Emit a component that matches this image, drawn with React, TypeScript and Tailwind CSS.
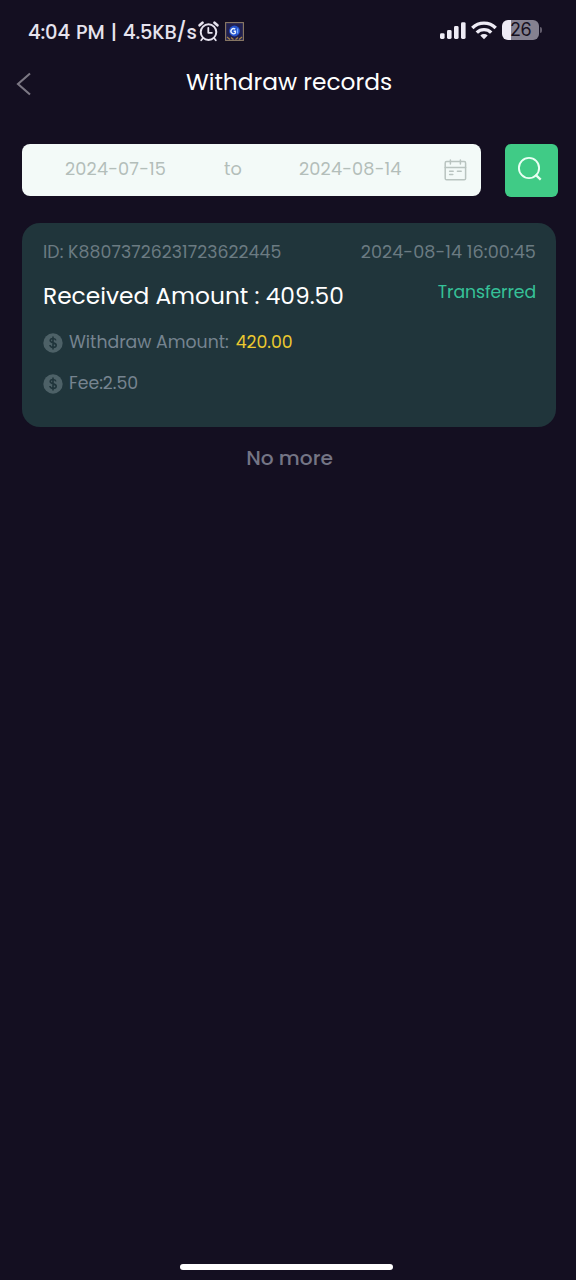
import React from "react";

function AlarmIcon() {
  return (
    <svg className="h-[21px] w-[21px] shrink-0" viewBox="0 0 21 21" fill="none" stroke="#e6e3ee" strokeLinecap="round">
      <circle cx="10.5" cy="11.1" r="7.8" strokeWidth="2" />
      <path d="M10.3 6.800v5h3.600" strokeWidth="1.8" strokeLinejoin="round" />
      <path d="M1.6 4.300 4.500 1.700M19.400 4.300 16.500 1.700" strokeWidth="2.600" />
      <path d="M4.800 17.200 3.200 19.200M16.200 17.200l1.600 2" strokeWidth="1.800" />
    </svg>
  );
}

function AppBadge() {
  return (
    <svg className="ml-[6px] h-[19px] w-[19px] shrink-0" viewBox="0 0 19 19">
      <rect x="0.6" y="0.6" width="17.8" height="17.8" fill="#20204f" stroke="#8c7b66" strokeWidth="1.1" />
      <path d="M2 15l3 2.500M6 15.500l2.500 2M13 15.500l-2.500 2M17 15l-3 2.500" stroke="#a58446" strokeWidth="1.2" fill="none" />
      <circle cx="9.5" cy="9" r="5.4" fill="#2554cf" />
      <path d="M10.200 7.100A2.600 2.600 0 1 0 10.400 11V9.200H8.700" stroke="#e8f3ff" strokeWidth="1.4" fill="none" />
      <path d="M12.600 6.500v5" stroke="#72aaff" strokeWidth="1.3" />
    </svg>
  );
}

function SignalIcon() {
  return (
    <svg className="h-[18px] w-[27px]" viewBox="0 0 27 18" fill="#eeebf5">
      <rect x="0" y="11.2" width="4.6" height="5.8" rx="1.4" />
      <rect x="7" y="8" width="4.6" height="9" rx="1.4" />
      <rect x="14" y="4" width="4.6" height="13" rx="1.4" />
      <rect x="21" y="0.200" width="4.6" height="16.8" rx="1.4" />
    </svg>
  );
}

function WifiIcon() {
  return (
    <svg className="ml-[4px] h-[19px] w-[26px]" viewBox="0 0 26 19" fill="none" stroke="#eeebf5" strokeWidth="3.4">
      <path d="M1.300 7a16.500 16.500 0 0 1 23.400 0" />
      <path d="M5.800 11.600a10.200 10.200 0 0 1 14.400 0" />
      <path d="M13 18.200 9.300 14.500a5.400 5.400 0 0 1 7.400 0z" fill="#eeebf5" stroke="none" />
    </svg>
  );
}

function Battery() {
  return (
    <div className="ml-[5px] flex items-center pb-[1px]">
      <div className="flex h-[20px] w-[37px] items-center justify-center rounded-[6px] bg-[linear-gradient(to_right,#eeebf5_0_9px,#858190_9px)] font-['Inter',sans-serif] text-[18px] leading-[20px] tracking-[-0.6px] text-[#17111f]">
        26
      </div>
      <div className="ml-[1px] h-[6px] w-[2px] rounded-r-full bg-[#625d6c]" />
    </div>
  );
}

function CalendarIcon() {
  return (
    <svg className="ml-[1px] h-[22px] w-[23px] shrink-0" viewBox="0 0 23 22" fill="none" stroke="#b9c4c0" strokeWidth="1.5" strokeLinecap="round">
      <rect x="1.2" y="2.6" width="20.4" height="18.2" rx="1.4" />
      <path d="M1.200 8.400h20.400M6.400 1v4M16.400 1v4M5.600 12.200h3.600M13.400 12.200h3.800M5.600 15.600h3.200" />
    </svg>
  );
}

function SearchIcon() {
  return (
    <svg className="h-[26px] w-[26px]" viewBox="0 0 26 26" fill="none" stroke="#e9fff3" strokeWidth="1.9">
      <circle cx="12" cy="12" r="10.1" />
      <path d="m18.400 18.600 5.300 5" strokeWidth="2.3" />
    </svg>
  );
}

function CoinIcon() {
  return (
    <svg className="mt-[3px] h-[20px] w-[20px] shrink-0" viewBox="0 0 20 20">
      <circle cx="10" cy="10" r="9.7" fill="#4d6167" />
      <path
        d="M12.900 7.400C12.600 6.200 11.600 5.500 10.100 5.500 8.400 5.500 7.200 6.300 7.200 7.600c0 3.100 6 1.500 6 4.600 0 1.400-1.300 2.200-3.100 2.200-1.800 0-3-.8-3.200-2.400M10 3.500v13"
        fill="none"
        stroke="#20353b"
        strokeWidth="1.6"
      />
    </svg>
  );
}

export default function App() {
  return (
    <div className="flex h-[1280px] w-[576px] flex-col overflow-hidden bg-[#140f21] font-['Poppins','Inter',sans-serif] whitespace-nowrap">
      <header className="flex h-[62px] items-start justify-between pt-[20px] pr-[34px] pl-[28px]">
        <div className="flex items-center">
          <span className="w-[170px] pt-[3px] text-[19.5px] leading-[20px] font-medium tracking-[-0.15px] [word-spacing:1.2px] text-[#e6e3ee]">4:04 PM | 4.5KB/s</span>
          <AlarmIcon />
          <AppBadge />
        </div>
        <div className="flex h-[21px] items-center">
          <SignalIcon />
          <WifiIcon />
          <Battery />
        </div>
      </header>

      <nav className="flex h-[42px] items-center px-[16px]">
        <svg className="mt-[2px] h-[24px] w-[16px]" viewBox="0 0 16 24" fill="none" stroke="#7b7783" strokeWidth="2.1">
          <path d="M14 1.500 2 12l12 10.500" />
        </svg>
        <h1 className="flex-1 pr-[14px] pb-[2px] text-center text-[23.3px] leading-[28px] text-white">Withdraw records</h1>
      </nav>

      <main className="flex flex-col pt-[40px] pr-[18px] pl-[22px]">
        <div className="flex justify-between">
          <div className="flex h-[52px] w-[459px] items-center rounded-[8px] bg-[#f3faf8] pl-[43px] text-[17.7px] leading-[24px] tracking-[0.15px] text-[#b3beba]">
            <span className="w-[159px] pb-[2px]">2024-07-15</span>
            <span className="w-[75px] pb-[2px]">to</span>
            <span className="w-[144px] pb-[2px]">2024-08-14</span>
            <CalendarIcon />
          </div>
          <button className="flex h-[53px] w-[53px] items-center justify-center rounded-[6px] bg-[#40cb86] pr-[4px] pb-[3px]">
            <SearchIcon />
          </button>
        </div>

        <section className="mt-[26px] mr-[2px] flex h-[204px] flex-col rounded-[18px] bg-[#20353b] pt-[17px] pr-[20px] pl-[21px] text-[17.3px] leading-[24px] text-[#6b7b82]">
          <div className="flex justify-between">
            <span className="tracking-[0.08px]">ID: K88073726231723622445</span>
            <span className="text-[17.6px] tracking-[0.08px]">2024-08-14 16:00:45</span>
          </div>
          <div className="mt-[16px] flex h-[28px] justify-between">
            <span className="pt-[4px] text-[23.3px] text-white">Received Amount : 409.50</span>
            <span className="tracking-[-0.1px] text-[#36c198]">Transferred</span>
          </div>
          <div className="mt-[22px] flex text-[#768490]">
            <CoinIcon />
            <span className="ml-[6px]">Withdraw Amount:</span>
            <span className="ml-[7px] text-[#ecc92f]">420.00</span>
          </div>
          <div className="mt-[17px] flex text-[#768490]">
            <CoinIcon />
            <span className="ml-[6px]">Fee:2.50</span>
          </div>
        </section>
        <p className="mt-[17px] pr-[1px] text-center text-[20.2px] leading-[28px] font-medium text-[#747585]">No more</p>
      </main>

      <footer className="mt-auto flex justify-center pr-[4px] pb-[10px]">
        <div className="h-[6px] w-[213px] rounded-full bg-white" />
      </footer>
    </div>
  );
}
